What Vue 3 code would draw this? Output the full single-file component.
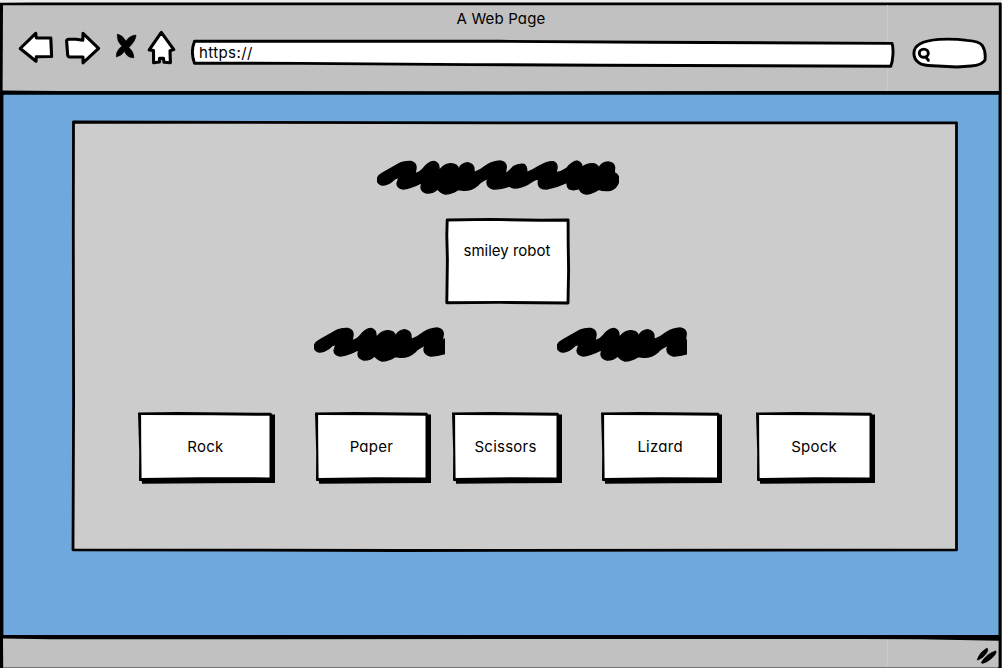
<script setup>
const scribble =
  'M22 88C22 76 30 74 40 68L85 42Q100 33 122 34Q140 38 138 55L135 72Q150 68 160 55Q175 35 192 34Q208 38 207 55L206 67Q215 45 240 41Q262 40 266 58Q272 40 293 38Q312 42 312 58L312 68Q330 62 350 46Q370 34 390 33Q408 36 409 50L406 72Q420 62 430 50Q445 41 462 43Q472 50 470 68Q490 60 505 50Q530 34 550 35Q563 40 561 55L558 68Q575 66 590 55Q605 36 622 33Q637 38 636 52Q650 40 670 41Q685 45 686 55Q695 37 715 36Q732 38 734 52L733 68Q747 75 747 88Q745 112 722 121Q700 124 686 118Q665 132 648 132Q632 130 628 116Q610 122 598 117Q590 110 591 97Q560 112 530 117Q508 117 505 102Q504 90 508 85Q490 90 478 100Q455 114 432 114Q422 112 419 108Q390 118 370 117Q350 112 351 95L355 84Q335 92 325 104Q305 122 280 121L264 119Q245 132 225 132Q210 128 203 117Q190 130 170 129Q153 125 153 112L155 98Q125 114 100 117Q82 115 81 100L87 82Q75 84 65 95Q50 106 37 105Q22 102 22 88Z'

const choices = [
  { name: 'Rock', w: 137, gap: 0 },
  { name: 'Paper', w: 116, gap: 39.5 },
  { name: 'Scissors', w: 110, gap: 21.2 },
  { name: 'Lizard', w: 121.5, gap: 38.8 },
  { name: 'Spock', w: 119, gap: 33.8 },
]
</script>

<template>
  <div class="window">
    <header class="chrome">
      <svg class="sketch" viewBox="0 0 1002 96">
        <path d="M0 0H1002V3H0Z" fill="#ebebeb" />
        <path d="M0 94H1002V96H0Z" fill="#6fa8dc" />
        <path d="M0 2.8L32 2.4H1001V96H998.6V94.8H3.5V96H0Z" fill="#000" />
        <path d="M1001 3H1002V96H1001Z" fill="#444" />
        <path d="M3 5.2H998.8V91L500 91.2L60 90.9L2.6 90.4Z" fill="#c1c1c1" />
        <path d="M887.5 5V91" stroke="#cacaca" stroke-width="1" />
      </svg>
      <div class="title">A Web Page</div>
      <div class="bar">
        <svg class="nav" width="160" height="38" viewBox="17 29 160 38">
          <g fill="#fff" stroke="#000" stroke-width="3.1" stroke-linejoin="round" stroke-linecap="round">
            <path d="M35.7 33.3L20.2 48.5L36 61.2L36.3 56.8L51.6 56.5L50.8 38L36.3 37.9Z" />
            <path d="M83 33.3L98.6 48.4L83 62.8L83 57L69.5 57Q67.6 56.6 67.6 54L66.6 41Q66.6 39.3 69 39.2L76 39.2L82.8 40.2Z" />
            <path d="M161.3 32.4L149.2 49.9L153.5 50.5L153.6 62.8L159.5 62L159.5 58.4L163.5 58.4L164 62.3L170.4 62.6L170 50.7L173.8 49.6Z" />
          </g>
          <path d="M117.3 34Q122 34.5 126 41Q129.5 35.5 136 35Q136.3 40 129 47.5Q134 52 134 57.8Q127 58 124.5 51.5Q121 56 116.3 57Q115.5 51.5 121.8 46Q116.5 41 117.3 34Z" stroke="#000" stroke-width=".5" />
        </svg>
        <div class="url">
          <svg class="sketch" viewBox="191 38 705 31">
            <path d="M194.5 41.2L500 41.3L650 42.3L892 43.4Q893.4 47 892.9 55Q892.5 62 890.8 66.2L600 65.3L470 64.6L300 63.4L194.5 63.2Q190.3 52 194.5 41.2Z" fill="#fff" stroke="#000" stroke-width="2.9" stroke-linejoin="round" />
          </svg>
          <span>https://</span>
        </div>
        <svg class="search" width="76" height="32" viewBox="912 37 76 32">
          <path d="M914.9 53C915 44 926 40.5 940 39.4Q955 38.6 968 40.4Q980 41.2 983.3 45.5Q987 51 986 60Q983 65.4 972 66L958 67L929 65.5C920 65 914.8 60 914.9 53Z" fill="#fff" stroke="#000" stroke-width="2.9" />
          <g fill="none" stroke="#000" stroke-width="2.9" stroke-linecap="round">
            <ellipse cx="924.8" cy="53.2" rx="4.5" ry="4.1" />
            <path d="M926.8 57L929.4 60.3" />
          </g>
        </svg>
      </div>
    </header>

    <main class="page">
      <section class="panel">
        <svg class="sketch" viewBox="71 120 888 433">
          <path d="M73.5 122L500 122.8L956.5 122.8V549.9L400 550.5L73 549.8L73.6 400L73.3 230Z" fill="#ccc" stroke="#000" stroke-width="2.8" stroke-linejoin="round" />
        </svg>
        <svg class="scribble heading" width="242.3" height="34.7" viewBox="21 30 727 104"><path :d="scribble" /></svg>
        <div class="picture">
          <svg class="sketch" viewBox="445 217 126 89">
            <path d="M447.2 220L490 219.4L540 220.3L568.1 220L568.2 245L568.6 270L568 303L500 302.4L446.8 302.7L447.4 260L446.8 235Z" fill="#fff" stroke="#000" stroke-width="2.9" stroke-linejoin="round" />
          </svg>
          <span>smiley robot</span>
        </div>
        <div class="scores">
          <svg class="scribble" width="131" height="34.7" viewBox="21 30 393 104"><path :d="scribble" /></svg>
          <svg class="scribble" width="130.3" height="34.7" viewBox="21 30 391 104"><path :d="scribble" /></svg>
        </div>
        <div class="choices">
          <button v-for="c in choices" :key="c.name" class="choice" :style="{ width: c.w + 'px', marginLeft: c.gap + 'px' }">
            <svg class="sketch" :viewBox="`0 0 ${c.w} 72`">
              <path :d="`M0 .5L40 0L${c.w - 4} .8L${c.w - 2.6} 2.6H${c.w}V71L70 71.2L4 71.8V69.2L1 68.8L1.2 40Z`" />
              <path :d="`M3.1 3L${c.w * 0.55} 3.2L${c.w - 5.5} 3.8V65.4L60 65.2L3.6 66L3.2 30Z`" fill="#fff" />
            </svg>
            <span>{{ c.name }}</span>
          </button>
        </div>
      </section>
    </main>

    <footer class="status">
      <svg class="sketch" viewBox="0 635 1002 33">
        <path d="M0 635H1002V668H0Z" />
        <path d="M3 638.4L50 639.2L860 639L920 639.3L998.6 640.8V667L3.2 667.2Z" fill="#c1c1c1" />
        <path d="M3 667.5H998" stroke="#777" />
        <path d="M887.5 640V667" stroke="#cacaca" />
        <path d="M1001.5 635V668" stroke="#444" />
        <path d="M977.1 659.8Q979 653 986.8 648.1Q989 649.2 986.6 653Q983 658.3 977.8 660Z M981.3 662.6Q986 654 995.8 650.8Q997.3 653 992 658Q986.8 663 982 663.4Z" stroke="#000" stroke-width=".6" />
      </svg>
    </footer>
  </div>
</template>

<style>
body {
  margin: 0;
  overflow: hidden;
}
</style>

<style scoped>
.window {
  width: 1002px;
  height: 668px;
  display: flex;
  flex-direction: column;
  font: 15px/20px Inter, "Liberation Sans", sans-serif;
  font-feature-settings: "cv11";
  color: #000;
}
svg {
  display: block;
  flex: none;
}
.chrome,
.url,
.panel,
.picture,
.choice,
.status {
  position: relative;
}
.sketch {
  position: absolute;
  inset: 0;
  width: 100%;
  height: 100%;
}
.scribble path {
  stroke: #000;
  stroke-width: 4;
  stroke-linejoin: round;
}
.chrome {
  height: 96px;
  flex: none;
}
.title {
  position: relative;
  padding-top: 9px;
  text-align: center;
  letter-spacing: 0.15px;
}
.bar {
  position: relative;
  display: flex;
  align-items: flex-start;
  padding-left: 17px;
}
.url {
  width: 705px;
  height: 31px;
  margin: 9px 0 0 14px;
}
.url span {
  position: relative;
  display: block;
  padding: 5px 0 0 8px;
  letter-spacing: 0.4px;
}
.search {
  margin: 8px 0 0 15px;
}
.page {
  flex: 1;
  box-sizing: border-box;
  padding: 24px 43px 0 71px;
  background: #6fa8dc;
  box-shadow: inset 3.4px 0 #000, inset -1px 0 #444, inset -3.5px 0 #000;
}
.panel {
  height: 433px;
  display: flex;
  flex-direction: column;
}
.heading {
  position: relative;
  margin: 40px 0 0 306px;
}
.picture {
  width: 126px;
  height: 89px;
  margin: 22.3px 0 0 374px;
  text-align: center;
}
.picture span {
  position: relative;
  display: block;
  padding-top: 24px;
  margin-left: -2px;
}
.scores {
  position: relative;
  display: flex;
  gap: 111.4px;
  margin: 21.3px 0 0 243.3px;
}
.choices {
  display: flex;
  margin: 50px 0 0 67.4px;
}
.choice {
  height: 72px;
  padding: 0 3px 2px 0;
  border: 0;
  background: none;
  font: inherit;
  font-feature-settings: inherit;
  letter-spacing: 0.25px;
  color: inherit;
}
.choice span {
  position: relative;
}
.status {
  height: 33px;
  flex: none;
}
</style>
